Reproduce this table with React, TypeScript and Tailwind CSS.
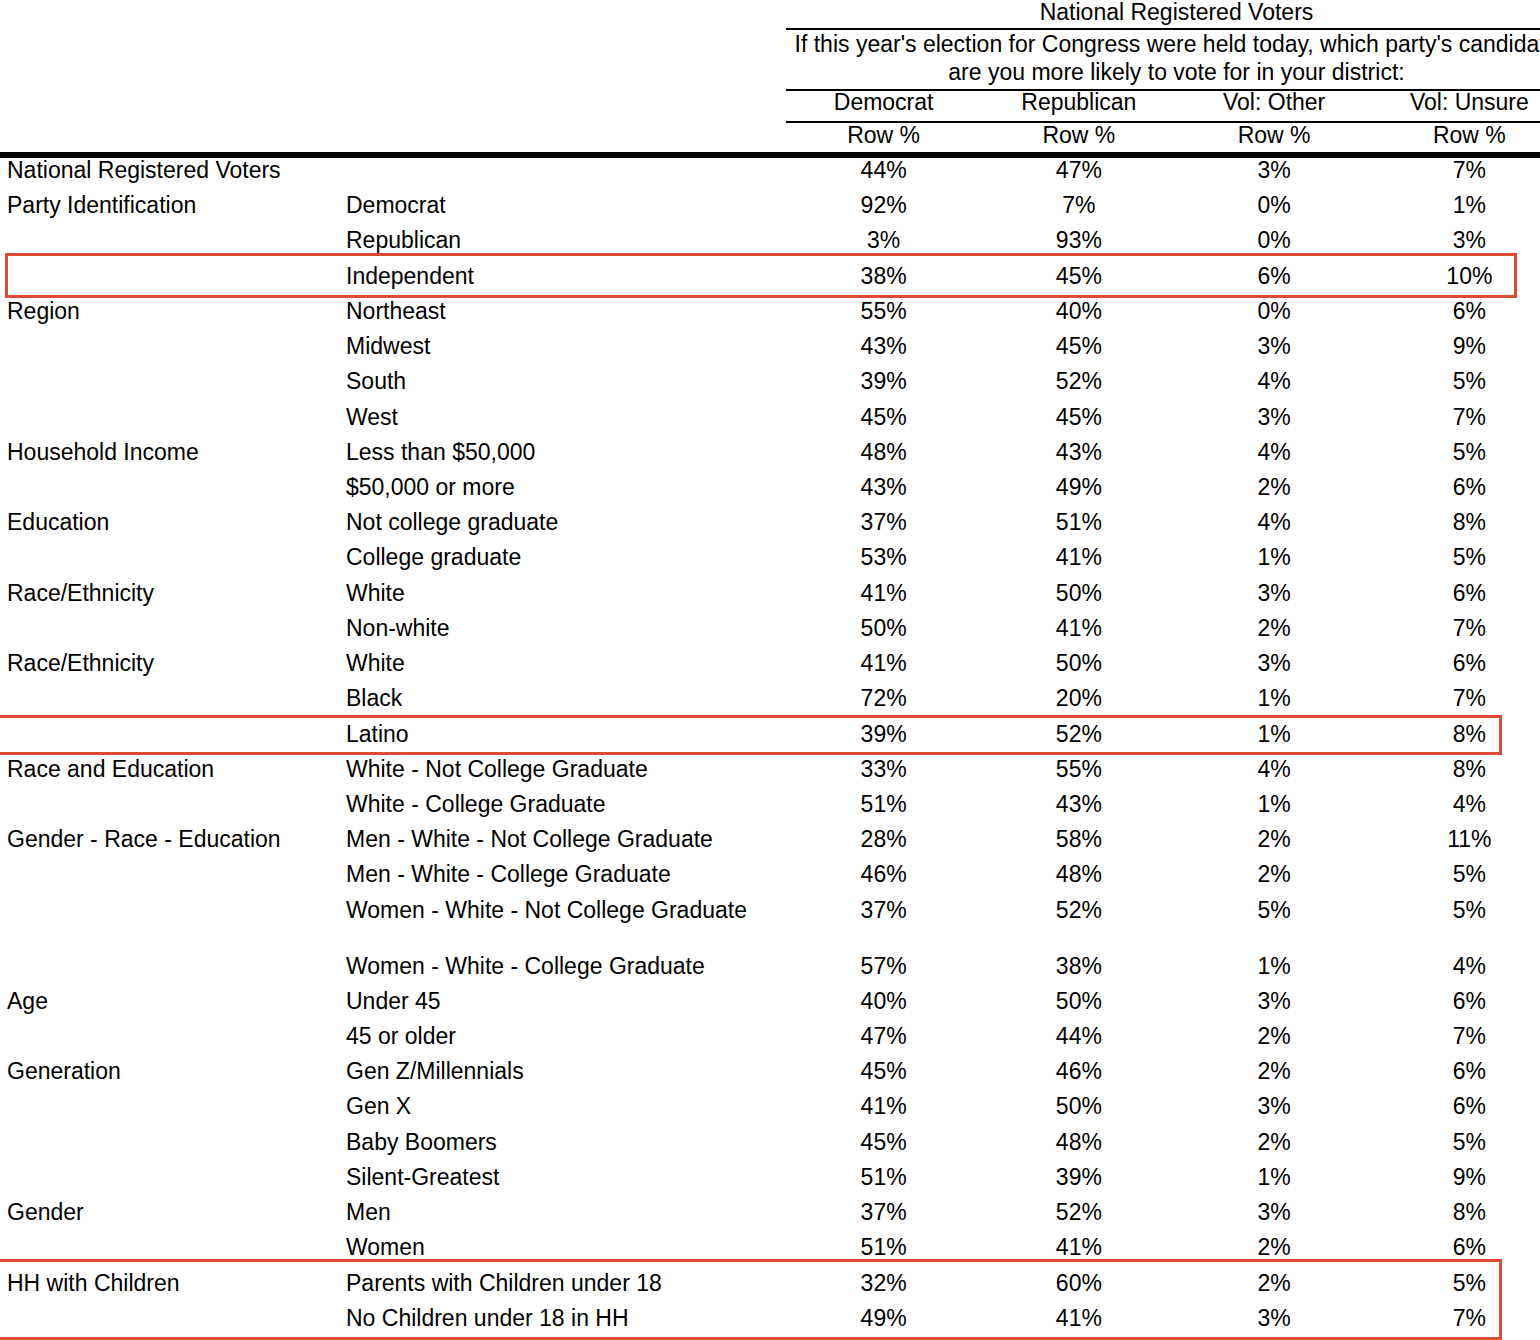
import React from "react";

type Row = {
  group: string;
  label: string;
  values: [number, number, number, number];
  tall?: boolean;
};

const rows: Row[] = [
  { group: "National Registered Voters", label: "", values: [44, 47, 3, 7] },
  { group: "Party Identification", label: "Democrat", values: [92, 7, 0, 1] },
  { group: "", label: "Republican", values: [3, 93, 0, 3] },
  { group: "", label: "Independent", values: [38, 45, 6, 10] },
  { group: "Region", label: "Northeast", values: [55, 40, 0, 6] },
  { group: "", label: "Midwest", values: [43, 45, 3, 9] },
  { group: "", label: "South", values: [39, 52, 4, 5] },
  { group: "", label: "West", values: [45, 45, 3, 7] },
  { group: "Household Income", label: "Less than $50,000", values: [48, 43, 4, 5] },
  { group: "", label: "$50,000 or more", values: [43, 49, 2, 6] },
  { group: "Education", label: "Not college graduate", values: [37, 51, 4, 8] },
  { group: "", label: "College graduate", values: [53, 41, 1, 5] },
  { group: "Race/Ethnicity", label: "White", values: [41, 50, 3, 6] },
  { group: "", label: "Non-white", values: [50, 41, 2, 7] },
  { group: "Race/Ethnicity", label: "White", values: [41, 50, 3, 6] },
  { group: "", label: "Black", values: [72, 20, 1, 7] },
  { group: "", label: "Latino", values: [39, 52, 1, 8] },
  { group: "Race and Education", label: "White - Not College Graduate", values: [33, 55, 4, 8] },
  { group: "", label: "White - College Graduate", values: [51, 43, 1, 4] },
  { group: "Gender - Race - Education", label: "Men - White - Not College Graduate", values: [28, 58, 2, 11] },
  { group: "", label: "Men - White - College Graduate", values: [46, 48, 2, 5] },
  { group: "", label: "Women - White - Not College Graduate", values: [37, 52, 5, 5], tall: true },
  { group: "", label: "Women - White - College Graduate", values: [57, 38, 1, 4] },
  { group: "Age", label: "Under 45", values: [40, 50, 3, 6] },
  { group: "", label: "45 or older", values: [47, 44, 2, 7] },
  { group: "Generation", label: "Gen Z/Millennials", values: [45, 46, 2, 6] },
  { group: "", label: "Gen X", values: [41, 50, 3, 6] },
  { group: "", label: "Baby Boomers", values: [45, 48, 2, 5] },
  { group: "", label: "Silent-Greatest", values: [51, 39, 1, 9] },
  { group: "Gender", label: "Men", values: [37, 52, 3, 8] },
  { group: "", label: "Women", values: [51, 41, 2, 6] },
  { group: "HH with Children", label: "Parents with Children under 18", values: [32, 60, 2, 5] },
  { group: "", label: "No Children under 18 in HH", values: [49, 41, 3, 7] },
];

const columns = ["Democrat", "Republican", "Vol: Other", "Vol: Unsure"];

const grid = "grid grid-cols-[346px_440px_repeat(4,195.25px)]";

export default function App() {
  return (
    <div
      className="relative w-[1540px] h-[1340px] overflow-hidden bg-white text-black text-[23px]"
      style={{ fontFamily: '"Liberation Sans", Arial, sans-serif' }}
    >
      <div className="w-[1567px]">
        {/* header block */}
        <div className="ml-[786px] text-center">
          <div className="h-[28px] leading-[24px]">National Registered Voters</div>
          <div className="border-t-2 border-black h-[61px] pb-[3px] leading-[28px] whitespace-nowrap">
            If this year's election for Congress were held today, which party's candidate
            <br />
            are you more likely to vote for in your district:
          </div>
          <div className="border-t-2 border-black h-[32px] leading-[22px] grid grid-cols-4">
            {columns.map((c) => (
              <div key={c}>{c}</div>
            ))}
          </div>
          <div className="border-t-2 border-black h-[31px] leading-[24px] grid grid-cols-4">
            {columns.map((c) => (
              <div key={c}>Row %</div>
            ))}
          </div>
        </div>
        <div className="h-[6px] bg-black" />

        {/* body */}
        <div>
          {rows.map((r, i) => (
            <div key={i} className={`${grid} ${r.tall ? "h-[56px]" : "h-[35.22px]"} leading-[25px]`}>
              <div className="pl-[7px] whitespace-nowrap">{r.group}</div>
              <div className="whitespace-nowrap">{r.label}</div>
              {r.values.map((v, j) => (
                <div key={j} className="text-center">
                  {v}%
                </div>
              ))}
            </div>
          ))}
        </div>
      </div>

      {/* annotation boxes */}
      <div className="absolute left-[5px] top-[253px] w-[1512px] h-[45px] border-[3px] border-[#db4b36]" />
      <div className="absolute left-[-10px] top-[715px] w-[1512px] h-[40px] border-[3px] border-[#db4b36]" />
      <div className="absolute left-[-10px] top-[1259px] w-[1512px] h-[81px] border-[3px] border-[#db4b36]" />
    </div>
  );
}
